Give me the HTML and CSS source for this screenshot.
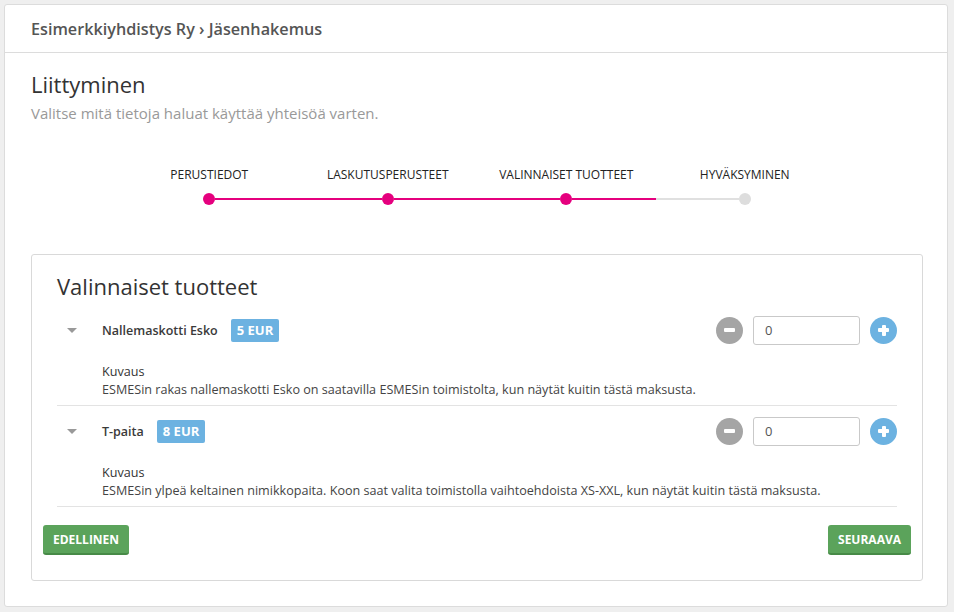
FILE: index.html
```html
<!DOCTYPE html>
<html lang="fi">
<head>
<meta charset="utf-8">
<title>Jäsenhakemus</title>
<link rel="stylesheet" href="styles.css">
</head>
<body>
<div class="page">
  <div class="card">
    <div class="card-header">Esimerkkiyhdistys Ry › Jäsenhakemus</div>
    <div class="card-body">
      <h1 class="title">Liittyminen</h1>
      <p class="subtitle">Valitse mitä tietoja haluat käyttää yhteisöä varten.</p>

      <div class="steps">
        <div class="step">
          <div class="step-label">PERUSTIEDOT</div>
          <div class="step-track">
            <span class="seg seg-none"></span><span class="dot dot-on"></span><span class="seg seg-on"></span>
          </div>
        </div>
        <div class="step">
          <div class="step-label">LASKUTUSPERUSTEET</div>
          <div class="step-track">
            <span class="seg seg-on"></span><span class="dot dot-on"></span><span class="seg seg-on"></span>
          </div>
        </div>
        <div class="step">
          <div class="step-label">VALINNAISET TUOTTEET</div>
          <div class="step-track">
            <span class="seg seg-on"></span><span class="dot dot-on"></span><span class="seg seg-on"></span>
          </div>
        </div>
        <div class="step">
          <div class="step-label">HYVÄKSYMINEN</div>
          <div class="step-track">
            <span class="seg seg-off"></span><span class="dot dot-off"></span><span class="seg seg-none"></span>
          </div>
        </div>
      </div>

      <div class="panel">
        <div class="panel-body">
          <h2 class="panel-title">Valinnaiset tuotteet</h2>

          <div class="product">
            <div class="product-row">
              <span class="caret"></span>
              <span class="product-name">Nallemaskotti Esko</span>
              <span class="badge">5 EUR</span>
              <div class="qty">
                <span class="circle circle-minus"><span class="bar"></span></span>
                <input class="qty-input" type="text" value="0">
                <span class="circle circle-plus"><span class="bar"></span><span class="bar bar-v"></span></span>
              </div>
            </div>
            <div class="product-desc">
              <div class="desc-label">Kuvaus</div>
              <div class="desc-text">ESMESin rakas nallemaskotti Esko on saatavilla ESMESin toimistolta, kun näytät kuitin tästä maksusta.</div>
            </div>
          </div>

          <div class="product">
            <div class="product-row">
              <span class="caret"></span>
              <span class="product-name">T-paita</span>
              <span class="badge">8 EUR</span>
              <div class="qty">
                <span class="circle circle-minus"><span class="bar"></span></span>
                <input class="qty-input" type="text" value="0">
                <span class="circle circle-plus"><span class="bar"></span><span class="bar bar-v"></span></span>
              </div>
            </div>
            <div class="product-desc">
              <div class="desc-label">Kuvaus</div>
              <div class="desc-text">ESMESin ylpeä keltainen nimikkopaita. Koon saat valita toimistolla vaihtoehdoista XS-XXL, kun näytät kuitin tästä maksusta.</div>
            </div>
          </div>
        </div>
        <div class="panel-footer">
          <button class="btn">EDELLINEN</button>
          <button class="btn">SEURAAVA</button>
        </div>
      </div>
    </div>
  </div>
</div>
</body>
</html>
```

FILE: styles.css
```css
* { box-sizing: border-box; }

html, body {
  margin: 0;
  padding: 0;
  background: #efefef;
  font-family: "Open Sans", "Noto Sans", sans-serif;
  color: #333;
}

.page {
  padding: 4px 6px 5px 4px;
}

.card {
  background: #fff;
  border: 1px solid #dcdcdc;
  border-radius: 3px;
}

.card-header {
  height: 48px;
  display: flex;
  align-items: center;
  padding: 0 26px;
  border-bottom: 1px solid #dcdcdc;
  font-size: 16.2px;
  font-weight: 600;
  color: #555;
}

.card-body {
  padding: 16px 24px 25px 26px;
}

.title {
  margin: 0;
  font-size: 22px;
  line-height: 30px;
  font-weight: 400;
  color: #333;
}

.subtitle {
  margin: 4px 0 0 0;
  font-size: 15px;
  line-height: 20px;
  color: #999;
}

.steps {
  display: flex;
  justify-content: center;
  margin-top: 43px;
}

.step {
  width: 178.5px;
  display: flex;
  flex-direction: column;
  align-items: stretch;
}

.step-label {
  text-align: center;
  font-size: 12px;
  line-height: 17px;
  font-weight: 400;
  color: #222;
  white-space: nowrap;
}

.step-track {
  margin-top: 10px;
  height: 12px;
  display: flex;
  align-items: center;
}

.seg {
  flex: 1;
  height: 2px;
}
.seg-on { background: #e5007e; }
.seg-off { background: #e0e0e0; }
.seg-none { background: transparent; }

.dot {
  width: 12px;
  height: 12px;
  border-radius: 50%;
  flex: none;
}
.dot-on { background: #e5007e; }
.dot-off { background: #dddddd; }

.panel {
  margin-top: 49px;
  border: 1px solid #d9d9d9;
  border-radius: 3px;
}

.panel-body {
  padding: 16px 25px 0 25px;
}

.panel-title {
  margin: 0 0 4px 0;
  font-size: 22px;
  line-height: 30px;
  font-weight: 400;
  color: #333;
}

.product {
  padding-top: 10px;
  border-bottom: 1px solid #e3e3e3;
  padding-bottom: 6px;
}

.product-row {
  display: flex;
  align-items: center;
  height: 30px;
}

.caret {
  width: 0;
  height: 0;
  border-left: 5px solid transparent;
  border-right: 5px solid transparent;
  border-top: 5px solid #999;
  margin-left: 10px;
  margin-right: 25px;
}

.product-name {
  font-size: 12.5px;
  font-weight: 600;
  color: #3a3a3a;
}

.badge {
  margin-left: 13px;
  height: 23px;
  padding: 0 6px;
  display: inline-flex;
  align-items: center;
  background: #6cb2e1;
  color: #fff;
  font-size: 13px;
  font-weight: 700;
  border-radius: 2px;
}

.qty {
  margin-left: auto;
  display: flex;
  align-items: center;
  gap: 10px;
}

.circle {
  width: 27px;
  height: 27px;
  border-radius: 50%;
  display: flex;
  align-items: center;
  justify-content: center;
  position: relative;
}
.circle-minus { background: #a5a5a5; }
.circle-plus { background: #6cb2e1; }

.bar {
  display: block;
  width: 11px;
  height: 4px;
  background: #fff;
  border-radius: 1px;
}
.bar-v {
  position: absolute;
  width: 4px;
  height: 11px;
}

.qty-input {
  width: 107px;
  height: 29px;
  border: 1px solid #c9c9c9;
  border-radius: 3px;
  padding: 0 11px;
  font-family: "Open Sans", "Noto Sans", sans-serif;
  font-size: 13px;
  color: #555;
  outline: none;
}

.product-desc {
  padding-left: 45px;
  margin-top: 18px;
  font-size: 12.6px;
  line-height: 18px;
}

.desc-label {
  color: #333;
  font-weight: 400;
}

.desc-text {
  color: #444;
}

.panel-footer {
  display: flex;
  justify-content: space-between;
  padding: 18px 11px 25px 11px;
}

.btn {
  height: 30px;
  padding: 0 10px;
  border: none;
  border-bottom: 2px solid #478a47;
  border-radius: 3px;
  background: #5ba35b;
  color: #fff;
  font-family: "Open Sans", "Noto Sans", sans-serif;
  font-size: 12px;
  font-weight: 700;
  cursor: pointer;
}
```
